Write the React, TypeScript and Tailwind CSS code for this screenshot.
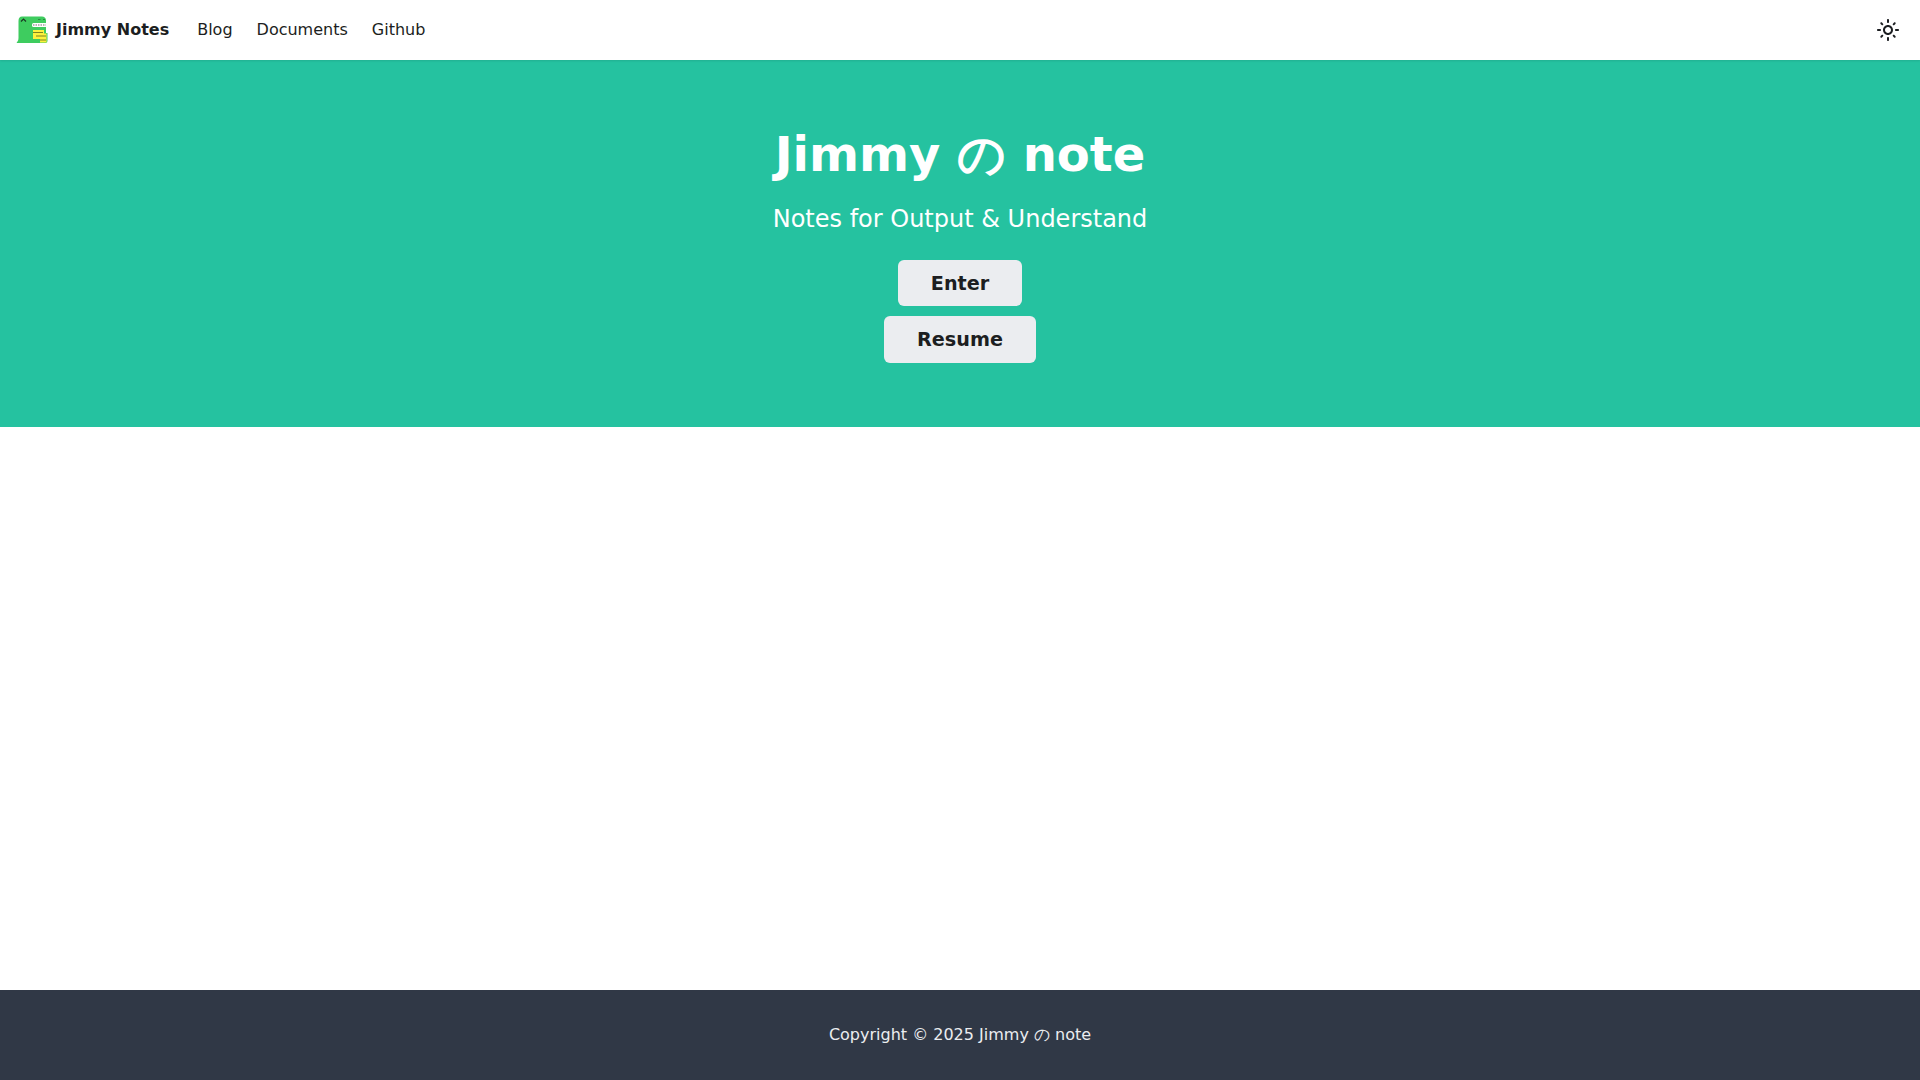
import React from "react"

function Logo() {
  return (
    <svg width="32" height="32" viewBox="0 -1 32 32" className="mr-2 shrink-0">
      {/* dino body */}
      <path d="M2.5 6 Q2.5 1.5 6 1.5 H26 Q29.5 1.5 30 5 V28 H1 Q0 27.5 1.5 26.5 Q2.5 25.5 2.5 23 Z" fill="#3ecc5f" />
      <path d="M5 6.5 L7.5 4 L10 6.5" stroke="#1c3a24" strokeWidth="1.2" fill="none" />
      <path d="M22 4.5 H24.5 M27 4.5 H29" stroke="#2a8a40" strokeWidth="1" />
      {/* mouth */}
      <rect x="16" y="8" width="15" height="4" rx="1.5" fill="#ffffff" />
      <path d="M17 10 H30" stroke="#6f6f6f" strokeWidth="1.2" strokeDasharray="1.5 1" />
      {/* book */}
      <path d="M17 14 H28 Q30 14 30 16 V18 H31.5 V26 Q31.5 28 29.5 28 H22 V24 H17 Z" fill="#3ecc5f" />
      <path d="M17 15 H28 V18.5 H30.5 V27.5 H24 V24 H17 Z" fill="#fdf13c" />
      <path d="M17 17.5 H27 M20 21 H30 M24 25 H30" stroke="#7d8420" strokeWidth="1" />
    </svg>
  )
}

function SunIcon() {
  return (
    <svg width="24" height="24" viewBox="0 0 24 24" fill="currentColor">
      <path d="M12,9c1.65,0,3,1.35,3,3s-1.35,3-3,3s-3-1.35-3-3S10.35,9,12,9 M12,7c-2.76,0-5,2.24-5,5s2.24,5,5,5s5-2.24,5-5 S14.76,7,12,7L12,7z M2,13l2,0c0.55,0,1-0.45,1-1s-0.45-1-1-1l-2,0c-0.55,0-1,0.45-1,1S1.45,13,2,13z M20,13l2,0c0.55,0,1-0.45,1-1 s-0.45-1-1-1l-2,0c-0.55,0-1,0.45-1,1S19.45,13,20,13z M11,2v2c0,0.55,0.45,1,1,1s1-0.45,1-1V2c0-0.55-0.45-1-1-1S11,1.45,11,2z M11,20v2c0,0.55,0.45,1,1,1s1-0.45,1-1v-2c0-0.55-0.45-1-1-1C11.45,19,11,19.45,11,20z M5.99,4.58c-0.39-0.39-1.03-0.39-1.41,0 c-0.39,0.39-0.39,1.03,0,1.41l1.06,1.06c0.39,0.39,1.03,0.39,1.41,0s0.39-1.03,0-1.41L5.99,4.58z M18.36,16.95 c-0.39-0.39-1.03-0.39-1.41,0c-0.39,0.39-0.39,1.03,0,1.41l1.06,1.06c0.39,0.39,1.03,0.39,1.41,0c0.39-0.39,0.39-1.03,0-1.41 L18.36,16.95z M19.42,5.99c0.39-0.39,0.39-1.03,0-1.41c-0.39-0.39-1.03-0.39-1.41,0l-1.06,1.06c-0.39,0.39-0.39,1.03,0,1.41 s1.03,0.39,1.41,0L19.42,5.99z M7.05,18.36c0.39-0.39,0.39-1.03,0-1.41c-0.39-0.39-1.03-0.39-1.41,0l-1.06,1.06 c-0.39,0.39-0.39,1.03,0,1.41s1.03,0.39,1.41,0L7.05,18.36z" />
    </svg>
  )
}

function App() {
  return (
    <div className="flex flex-col min-h-screen bg-white text-[#1c1e21] font-['DejaVu_Sans',sans-serif]">
      <nav className="flex items-center justify-between h-[60px] px-4 bg-white shadow-[0_1px_2px_0_rgba(0,0,0,0.1)] z-10">
        <div className="flex items-center">
          <a className="flex items-center mr-4 font-bold">
            <Logo />
            Jimmy Notes
          </a>
          <a className="px-3">Blog</a>
          <a className="px-3">Documents</a>
          <a className="px-3">Github</a>
        </div>
        <button className="flex items-center justify-center w-8 h-8">
          <SunIcon />
        </button>
      </nav>
      <header className="flex flex-col items-center bg-[#25c2a0] text-white py-16 h-[367px]">
        <h1 className="text-5xl font-bold leading-[60px]">Jimmy の note</h1>
        <p className="text-2xl mt-4 leading-[39.6px]">Notes for Output &amp; Understand</p>
        <a className="mt-5 px-[33px] pt-0.5 h-[46.9px] flex items-center rounded-md bg-[#ebedf0] text-[#1c1e21] text-[19.2px] font-bold">
          Enter
        </a>
        <a className="mt-2.5 px-[33px] pt-0.5 h-[46.9px] flex items-center rounded-md bg-[#ebedf0] text-[#1c1e21] text-[19.2px] font-bold">
          Resume
        </a>
      </header>
      <main className="flex-1" />
      <footer className="flex items-center justify-center h-[90px] bg-[#303846] text-[#ebedf0]">
        Copyright © 2025 Jimmy の note
      </footer>
    </div>
  )
}

export default App
